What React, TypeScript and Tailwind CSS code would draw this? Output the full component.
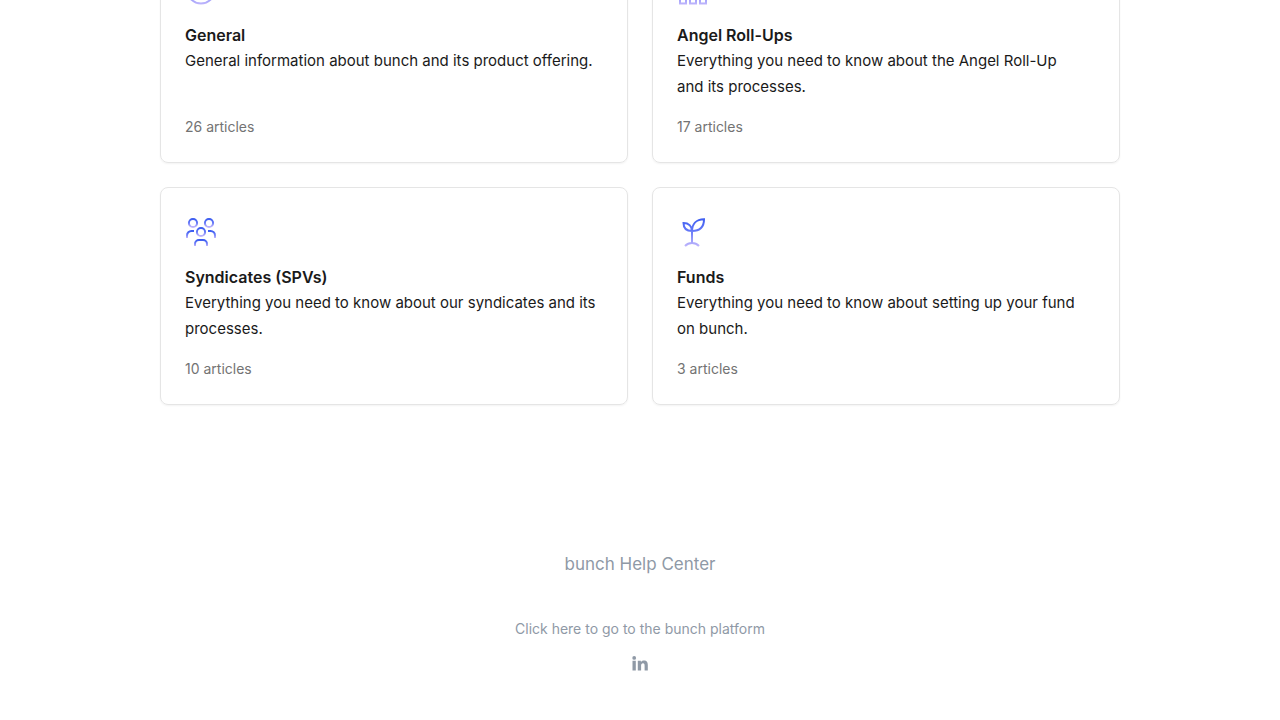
import React from "react";

type IconProps = { id: string; perShape?: boolean; children: React.ReactNode };

function GradientIcon({ id, perShape = false, children }: IconProps) {
  const direction = perShape
    ? { x1: "0", y1: "0", x2: "0", y2: "1" }
    : { gradientUnits: "userSpaceOnUse", x1: "16", y1: "2", x2: "16", y2: "31" };
  return (
    <svg
      className="block size-8"
      viewBox="0 0 32 32"
      fill="none"
      stroke={`url(#${id})`}
      strokeWidth="2"
      aria-hidden="true"
    >
      <defs>
        <linearGradient id={id} {...direction}>
          <stop offset="0" stopColor="#3b5cf0" />
          <stop offset="0.45" stopColor="#6478f8" />
          <stop offset="1" stopColor="#c3b8fc" />
        </linearGradient>
      </defs>
      {children}
    </svg>
  );
}

const infoIcon = (
  <GradientIcon id="grad-info">
    <circle cx="16" cy="16" r="13.6" />
    <path d="M16 14.5V22M16 9v2.5" />
  </GradientIcon>
);

const gridIcon = (
  <GradientIcon id="grad-grid">
    <path d="M3 23h6v6.4H3zM13 23h6v6.4h-6zM23 23h6v6.4h-6zM16 4v14M6 20v-5h20v5" />
  </GradientIcon>
);

const peopleIcon = (
  <GradientIcon id="grad-people" perShape>
    <circle cx="8" cy="7" r="4.1" />
    <circle cx="24" cy="7" r="4.1" />
    <circle cx="16" cy="16" r="4.1" />
    <path d="M2 22v-2.500a4.500 4.500 0 0 1 4.500-4.500H9" />
    <path d="M30 22v-2.500a4.500 4.500 0 0 0-4.500-4.500H23" />
    <path d="M10 30v-2a4 4 0 0 1 4-4h4a4 4 0 0 1 4 4v2" />
  </GradientIcon>
);

const sproutIcon = (
  <GradientIcon id="grad-sprout">
    <path d="M15 15.500c0-7 4-12.200 12-12.200C27 11 23 15 15 15M15 15C9.500 15 6.500 12 6.500 7c5 0 8.500 3 8.500 8.500V27M8 30c4-4 10-4 14 0" />
  </GradientIcon>
);

const collections = [
  {
    title: "General",
    description: "General information about bunch and its product offering.",
    count: "26 articles",
    icon: infoIcon,
  },
  {
    title: "Angel Roll-Ups",
    description: "Everything you need to know about the Angel Roll-Up and\u00a0its processes.",
    count: "17 articles",
    icon: gridIcon,
  },
  {
    title: "Syndicates (SPVs)",
    description: "Everything you need to know about our syndicates and its processes.",
    count: "10 articles",
    icon: peopleIcon,
  },
  {
    title: "Funds",
    description: "Everything you need to know about setting up your fund on\u00a0bunch.",
    count: "3 articles",
    icon: sproutIcon,
  },
];

export default function App() {
  return (
    <div className="overflow-hidden bg-white font-['Inter','Liberation_Sans',sans-serif] text-[#1a1a1a]">
      <main className="mx-auto -mt-[55px] grid max-w-[960px] grid-cols-2 gap-6">
        {collections.map((item) => (
          <a
            key={item.title}
            href="#"
            className="flex flex-col rounded-lg border border-[#e5e5e5] p-6 shadow-[0_1px_2px_rgba(0,0,0,0.05)]"
          >
            <div className="flex h-10 items-center">{item.icon}</div>
            <h2 className="mt-3 text-base/[26px] font-semibold">{item.title}</h2>
            <p className="text-[15px]/[26px]">{item.description}</p>
            <p className="mt-auto pt-4 text-sm/[22px] text-[#737373]">{item.count}</p>
          </a>
        ))}
      </main>
      <footer className="mt-[144px] flex flex-col items-center pb-10 text-[#8f99a6]">
        <a href="#" className="text-[17px]/[30px]">
          bunch Help Center
        </a>
        <a href="#" className="mt-10 text-sm/[20px]">
          Click here to go to the bunch platform
        </a>
        <a href="#" aria-label="LinkedIn" className="mt-4 block">
          <svg className="block size-4" viewBox="0 0 16 16" fill="currentColor" aria-hidden="true">
            <circle cx="2.200" cy="2.900" r="1.900" />
            <path d="M.5 5.800h3.300V15.500H.5zM5.800 5.800h3.100v1.300c.5-.9 1.500-1.600 3-1.600 3 0 3.900 1.900 3.900 4.600v5.400h-3.200v-4.800c0-1.300-.2-2.400-1.600-2.400s-1.900 1.100-1.900 2.300v4.900H5.800z" />
          </svg>
        </a>
      </footer>
    </div>
  );
}
